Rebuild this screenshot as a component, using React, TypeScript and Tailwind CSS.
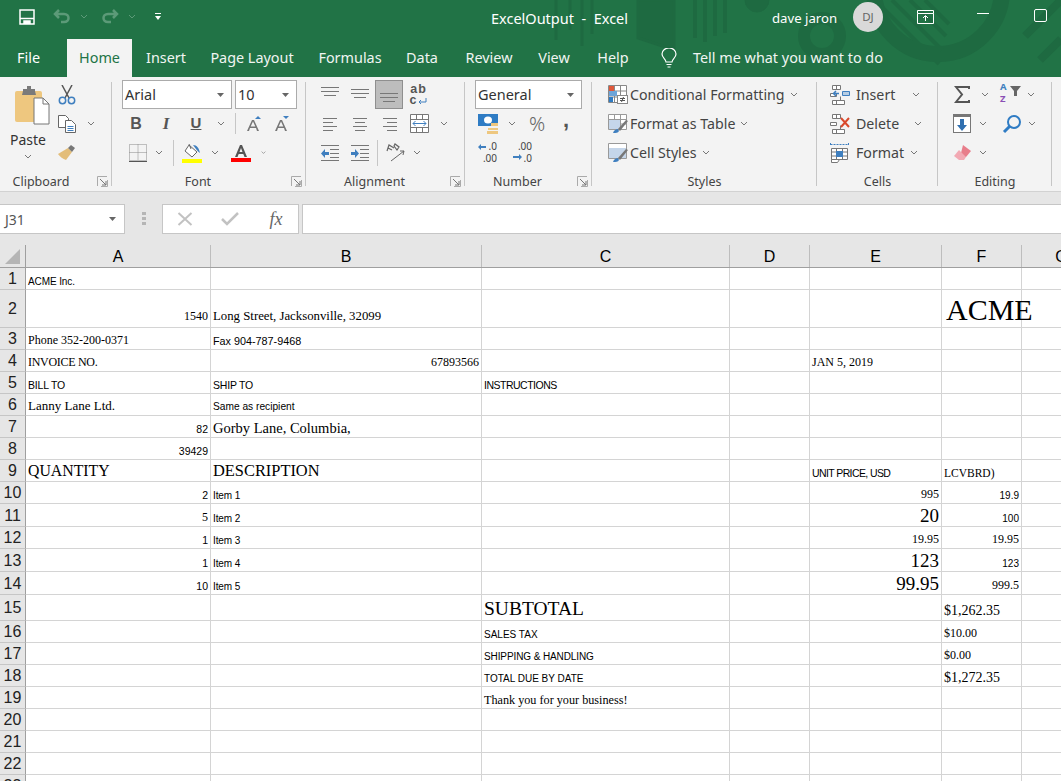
import type { ReactNode } from "react";

const ui = "font-['Noto_Sans',sans-serif]";
const sans = "font-['Liberation_Sans',sans-serif]";
const serif = "font-['Liberation_Serif',serif]";

/* ── small helpers ─────────────────────────────────── */

function Chev({ color = "#777" }: { color?: string }) {
  return (
    <svg width="8" height="5" viewBox="0 0 8 5" fill="none" stroke={color} strokeWidth="1">
      <path d="M1 1l3 3 3-3" />
    </svg>
  );
}

function Caret() {
  return (
    <svg width="7" height="4" viewBox="0 0 7 4" fill="#666">
      <path d="M0 0h7L3.5 4z" />
    </svg>
  );
}

function Launcher() {
  return (
    <svg width="11" height="11" viewBox="0 0 11 11" fill="none" stroke="#777">
      <path d="M.5 10V.5H10" stroke="#aaa" />
      <path d="M3 3l6 6M9 5v4H5" />
      <path d="M10.5 4v6.5H4" stroke="#aaa" />
    </svg>
  );
}

function Slot({ w, children, className = "" }: { w: string; children?: ReactNode; className?: string }) {
  return <div className={`${w} h-full flex items-center justify-center shrink-0 ${className}`}>{children}</div>;
}

function Lines({ rows }: { rows: [number, number, number][] }) {
  return (
    <svg width="18" height="16" viewBox="0 0 18 16" stroke="#777">
      {rows.map(([y, a, b], i) => (
        <path key={i} d={`M${a} ${y + 0.5}H${b}`} />
      ))}
    </svg>
  );
}

function Group({ w, label, launcher, pad = "", children }: { w: string; label: string; launcher?: boolean; pad?: string; children: ReactNode }) {
  return (
    <div className={`${w} shrink-0 relative flex flex-col`}>
      <div className="flex-1">{children}</div>
      <div className={`h-[20px] pt-[2px] flex items-center justify-center text-[12.5px] text-[#444] ${pad}`}>{label}</div>
      {launcher && (
        <div className="absolute right-[4px] bottom-[4px] flex">
          <Launcher />
        </div>
      )}
      <div className="absolute right-0 top-[5px] bottom-[5px] w-px bg-[#c6c6c6]" />
    </div>
  );
}

function Row({ children, className = "" }: { children: ReactNode; className?: string }) {
  return <div className={`h-[29px] flex items-center ${className}`}>{children}</div>;
}

function Select({ w, text }: { w: string; text: string }) {
  return (
    <div className={`${w} h-[29px] shrink-0 bg-white border border-[#ababab] flex items-center justify-between pl-[2px] pr-[7px] text-[14.5px] text-[#333]`}>
      <span>{text}</span>
      <Caret />
    </div>
  );
}

/* ── ribbon icons ──────────────────────────────────── */

function PasteIcon() {
  return (
    <svg width="36" height="40" viewBox="0 0 36 40">
      <rect x="1" y="5" width="27" height="31" rx="2" fill="#eec77f" />
      <path d="M9 5V3h4V0h4v3h4v2l1 4H8z" fill="#7a7a7a" />
      <path d="M20 12h9l6 6v20H20z" fill="#fff" stroke="#777" />
      <path d="M29 12v6h6" fill="none" stroke="#777" />
    </svg>
  );
}

function ScissorsIcon() {
  return (
    <svg width="18" height="20" viewBox="0 0 18 20" fill="none">
      <path d="M4 0l7 13M14 0L7 13" stroke="#555" strokeWidth="1.5" />
      <circle cx="4.5" cy="15.5" r="3.2" stroke="#3f7fbf" strokeWidth="1.5" />
      <circle cx="13.5" cy="15.5" r="3.2" stroke="#3f7fbf" strokeWidth="1.5" />
    </svg>
  );
}

function CopyIcon() {
  return (
    <svg width="18" height="18" viewBox="0 0 18 18" fill="#fff" stroke="#666">
      <path d="M.5.5h7l3 3v9h-10z" />
      <path d="M7.5 5.5h6l4 4v8h-10z" />
      <path d="M9.5 11.5h6M9.5 13.5h6M9.5 15.5h6" stroke="#3f7fbf" />
    </svg>
  );
}

function BrushIcon() {
  return (
    <svg width="18" height="16" viewBox="0 0 18 16">
      <path d="M10 3l4 4-6 8c-3-1-6-3-8-6z" fill="#e3bd79" />
      <path d="M10 3l3-3 4 3-3 4z" fill="#777" />
    </svg>
  );
}

function BorderIcon() {
  return (
    <svg width="18" height="18" viewBox="0 0 18 18" fill="none" stroke="#888" strokeDasharray="1 1">
      <path d="M.5.5h17v16H.5zM9 .5v16M.5 8.5h17" />
      <path d="M0 17.5h18" stroke="#555" strokeDasharray="none" />
    </svg>
  );
}

function FillIcon() {
  return (
    <svg width="20" height="20" viewBox="0 0 20 20">
      <path d="M7 2l8 7-5 5-7-6z" fill="#fff" stroke="#666" />
      <path d="M7 1l2 5" stroke="#666" fill="none" />
      <path d="M11 2c4 0 6 3 7 8-2-1-3-3-4-4z" fill="#3f7fbf" />
      <rect y="16" width="20" height="4" fill="#ffff00" />
    </svg>
  );
}

function FontColorIcon() {
  return (
    <svg width="20" height="18" viewBox="0 0 20 18">
      <path d="M4 13L9 1h2l5 12h-2.5l-1.200-3H7.700l-1.200 3zM8.500 8h3L10 4z" fill="#555" />
      <rect y="14" width="20" height="4.5" fill="#f00" />
    </svg>
  );
}

function GrowIcon({ up }: { up: boolean }) {
  return (
    <svg width="16" height="16" viewBox="0 0 16 16">
      <path d="M1 15L6 4h2l5 11h-2l-1-3H4l-1 3zM4.700 10.500h4.600L7 5.500z" fill="#777" />
      <path d={up ? "M9 3l3-3 3 3z" : "M9 0h6l-3 3z"} fill="#3f7fbf" />
    </svg>
  );
}

function WrapIcon() {
  return (
    <svg width="18" height="18" viewBox="0 0 18 18" fill="none">
      <path d="M9 16h7v-4" stroke="#3f7fbf" />
      <path d="M11 14l-2 2 2 2" stroke="#3f7fbf" />
    </svg>
  );
}

function MergeIcon() {
  return (
    <svg width="19" height="19" viewBox="0 0 19 19" fill="#fff" stroke="#777">
      <path d="M.5.5h18v18H.5zM.5 5.500h18M.5 13.500h18M6.500.5v5M12.500.5v5M6.500 13.500v5M12.500 13.500v5" />
      <path d="M3 9.500h13M5.500 7L3 9.500 5.500 12M13.500 7l2.500 2.500-2.500 2.500" stroke="#3f7fbf" fill="none" />
    </svg>
  );
}

function IndentIcon({ flip }: { flip: boolean }) {
  return (
    <svg width="18" height="16" viewBox="0 0 18 16">
      <path d="M0 .5h18M9 4.500h9M9 8.500h9M9 12.500h9M0 15.500h18" stroke="#777" />
      <path d={flip ? "M0 8.500L4 4v3h4v3H4v3z" : "M8 8.500L4 4v3H0v3h4v3z"} fill="#3f7fbf" />
    </svg>
  );
}

function OrientIcon() {
  return (
    <svg width="20" height="20" viewBox="0 0 20 20" fill="none" stroke="#666">
      <path d="M5 18L18 8M18 8h-4M18 8l-1 4" />
      <path d="M1 8l2-6 5 3M2 5l4 2M8 3l1-2 4 3-2 3z" strokeWidth="1.2" />
    </svg>
  );
}

function AccountingIcon() {
  return (
    <svg width="20" height="20" viewBox="0 0 20 20">
      <rect width="20" height="12" fill="#2f7cc4" />
      <ellipse cx="10" cy="6" rx="4" ry="3.5" fill="#fff" />
      <path d="M10 14h10v2H10zM9 17h11v3H9z" fill="#eec77f" />
      <path d="M13 9h7v3h-7z" fill="#eec77f" />
    </svg>
  );
}

function DecimalIcon({ inc }: { inc: boolean }) {
  return (
    <div className="relative w-[20px] h-[19px]">
      <svg width="20" height="19" viewBox="0 0 20 19" className="absolute inset-0">
        <path d={inc ? "M6 14H0v2h6v2l3-3-3-3z" : "M3 1L0 4l3 3V5h5V3H3z"} fill="#3f7fbf" transform={inc ? "translate(0,-1)" : "translate(0,0)"} />
      </svg>
      <div className="absolute right-[1px] top-[-3px] text-[10px] leading-[12px] text-[#444] text-right">
        {inc ? ".00" : ".0"}
        <br />
        {inc ? ".0" : ".00"}
      </div>
    </div>
  );
}

function CondIcon() {
  return (
    <svg width="20" height="19" viewBox="0 0 20 19" stroke="#888" fill="#fff">
      <path d="M.5.5h18v17H.5zM.5 6h18M.5 12h18M6.500.5v17M12.500.5v17" />
      <path d="M1 1h5v5H1z" fill="#e0583a" stroke="none" />
      <path d="M1 6h8v5H1z" fill="#6da4d8" stroke="none" />
      <path d="M1 12h4v5H1z" fill="#2f7cc4" stroke="none" />
      <rect x="9.5" y="10.5" width="10" height="8" fill="#fff" />
      <path d="M12 13.500h5M12 15.500h5M15.500 12l-2 5" stroke="#555" />
    </svg>
  );
}

function TableStyleIcon({ cell }: { cell: boolean }) {
  return (
    <svg width="20" height="19" viewBox="0 0 20 19" stroke="#999" fill="#fff">
      <path d="M.5.5h18v15H.5z" />
      {cell ? (
        <path d="M1 5h17v10H1z" fill="#c5d6ea" stroke="none" />
      ) : (
        <path d="M.5 5.500h18M.5 10h18M6.500.5v15M12.500.5v15" />
      )}
      {!cell && <path d="M1 6h11v9H1z" fill="#c5d6ea" stroke="none" />}
      <path d="M5 19c1-3 3-4 5-4l1 2c-1 2-3 2-6 2z" fill="#3f7fbf" stroke="none" />
      <path d="M10 15l8-9 2 1-8 10z" fill="#777" stroke="none" />
    </svg>
  );
}

function CellOpIcon({ kind }: { kind: "insert" | "delete" | "format" }) {
  return (
    <svg width="20" height="20" viewBox="0 0 20 20" fill="#fff" stroke="#777">
      {kind === "format" ? (
        <>
          <path d="M.5 1.500h18M.5 0v3M18.500 0v3" stroke="#3f7fbf" strokeDasharray="2 1" />
          <path d="M1.500 5.500h16v11h-16zM1.500 9h16M1.500 13h16M6.500 5.500v11M12.500 5.500v11" />
          <rect x="6" y="8" width="7" height="6" fill="#3f7fbf" stroke="none" />
          <path d="M1.500 16.500h8l-2 3h-6z" />
        </>
      ) : (
        <>
          <path d="M2.500.5h8v4h-8zM2.500 15.500h12v4h-12zM6.500.5v4M6.500 15.500v4M.5 8.500h6v3h-6z" />
          <path d="M10.500 15.500v-4" />
          {kind === "insert" ? (
            <>
              <path d="M12.500 6.500h7v4h-7z" fill="#b7cde3" stroke="#3f7fbf" />
              <path d="M9 8.500H3.500M6 6L3.500 8.500 6 11" stroke="#3f7fbf" fill="none" strokeWidth="1.5" />
            </>
          ) : (
            <path d="M11 4l8 9M19 4l-8 9" stroke="#d9492c" strokeWidth="2" />
          )}
        </>
      )}
    </svg>
  );
}

function FillDownIcon() {
  return (
    <svg width="18" height="20" viewBox="0 0 18 20">
      <rect x=".5" y=".5" width="17" height="18" fill="#fff" stroke="#777" />
      <path d="M1 1h16v2H1z" fill="#777" />
      <path d="M7 5h4v6h3l-5 6-5-6h3z" fill="#2f6fb0" />
    </svg>
  );
}

function SortIcon() {
  return (
    <div className="relative w-[22px] h-[19px]">
      <div className="absolute left-0 top-[-3px] text-[9.5px] leading-[10px] font-bold text-[#3f7fbf]">A</div>
      <div className="absolute left-0 top-[9px] text-[9.5px] leading-[10px] font-bold text-[#8a4fb5]">Z</div>
      <svg width="11" height="10" viewBox="0 0 11 10" className="absolute left-[10px] top-[1px]">
        <path d="M0 0h11L7 5v5H4V5z" fill="#666" />
      </svg>
    </div>
  );
}

/* ── sheet data ────────────────────────────────────── */

// p overrides the bottom gap that a cell's font would get by default
type Cell = { c: number; t: string; f: "s" | "t"; z: string; r?: boolean; x?: string; p?: string };

const columns = [
  { name: "A", w: "w-[185px]" },
  { name: "B", w: "w-[271px]" },
  { name: "C", w: "w-[248px]" },
  { name: "D", w: "w-[80px]" },
  { name: "E", w: "w-[132px]" },
  { name: "F", w: "w-[80px]" },
  { name: "G", w: "w-[80px]" },
];

const rows: { n: number; h: string; cells: Cell[] }[] = [
  { n: 1, h: "h-[22px]", cells: [{ c: 0, t: "ACME Inc.", f: "s", z: "text-[10px] tracking-[-0.1px]" }] },
  {
    n: 2,
    h: "h-[38px]",
    cells: [
      { c: 0, t: "1540", f: "t", z: "text-[12px]", r: true, p: "pb-[3px]" },
      { c: 1, t: "Long Street, Jacksonville, 32099", f: "t", z: "text-[12.8px]", p: "pb-[3px]" },
      { c: 5, t: "ACME", f: "t", z: "text-[30px]", x: "pl-[2px]", p: "pb-0" },
    ],
  },
  {
    n: 3,
    h: "h-[22px]",
    cells: [
      { c: 0, t: "Phone 352-200-0371", f: "t", z: "text-[12px]" },
      { c: 1, t: "Fax 904-787-9468", f: "s", z: "text-[10.8px]" },
    ],
  },
  {
    n: 4,
    h: "h-[22px]",
    cells: [
      { c: 0, t: "INVOICE NO.", f: "t", z: "text-[12px] tracking-[-0.3px]" },
      { c: 1, t: "67893566", f: "t", z: "text-[12px]", r: true },
      { c: 4, t: "JAN 5, 2019", f: "t", z: "text-[12px]" },
    ],
  },
  {
    n: 5,
    h: "h-[22px]",
    cells: [
      { c: 0, t: "BILL TO", f: "s", z: "text-[10.5px] tracking-[-0.2px]" },
      { c: 1, t: "SHIP TO", f: "s", z: "text-[10.5px] tracking-[-0.2px]" },
      { c: 2, t: "INSTRUCTIONS", f: "s", z: "text-[10.5px] tracking-[-0.5px]" },
    ],
  },
  {
    n: 6,
    h: "h-[22px]",
    cells: [
      { c: 0, t: "Lanny Lane Ltd.", f: "t", z: "text-[13px]" },
      { c: 1, t: "Same as recipient", f: "s", z: "text-[10.2px]" },
    ],
  },
  {
    n: 7,
    h: "h-[22px]",
    cells: [
      { c: 0, t: "82", f: "s", z: "text-[10.5px]", r: true },
      { c: 1, t: "Gorby Lane, Columbia,", f: "t", z: "text-[14.5px]", p: "pb-0" },
    ],
  },
  { n: 8, h: "h-[22px]", cells: [{ c: 0, t: "39429", f: "s", z: "text-[10.5px]", r: true }] },
  {
    n: 9,
    h: "h-[22px]",
    cells: [
      { c: 0, t: "QUANTITY", f: "t", z: "text-[15.8px]" },
      { c: 1, t: "DESCRIPTION", f: "t", z: "text-[16.4px]", p: "pb-0" },
      { c: 4, t: "UNIT PRICE, USD", f: "s", z: "text-[10.5px] tracking-[-0.6px]" },
      { c: 5, t: "LCVBRD)", f: "t", z: "text-[11.5px]" },
    ],
  },
  {
    n: 10,
    h: "h-[22px]",
    cells: [
      { c: 0, t: "2", f: "s", z: "text-[10.5px]", r: true },
      { c: 1, t: "Item 1", f: "s", z: "text-[10px] tracking-[-0.1px]" },
      { c: 4, t: "995", f: "t", z: "text-[12px]", r: true },
      { c: 5, t: "19.9", f: "s", z: "text-[10px]", r: true },
    ],
  },
  {
    n: 11,
    h: "h-[23px]",
    cells: [
      { c: 0, t: "5", f: "t", z: "text-[12px]", r: true },
      { c: 1, t: "Item 2", f: "s", z: "text-[10px] tracking-[-0.1px]" },
      { c: 4, t: "20", f: "t", z: "text-[19px]", r: true, p: "mb-[-1px]" },
      { c: 5, t: "100", f: "s", z: "text-[10px]", r: true },
    ],
  },
  {
    n: 12,
    h: "h-[22px]",
    cells: [
      { c: 0, t: "1", f: "s", z: "text-[10.5px]", r: true },
      { c: 1, t: "Item 3", f: "s", z: "text-[10px] tracking-[-0.1px]" },
      { c: 4, t: "19.95", f: "t", z: "text-[12px]", r: true },
      { c: 5, t: "19.95", f: "t", z: "text-[12px]", r: true },
    ],
  },
  {
    n: 13,
    h: "h-[23px]",
    cells: [
      { c: 0, t: "1", f: "s", z: "text-[10.5px]", r: true },
      { c: 1, t: "Item 4", f: "s", z: "text-[10px] tracking-[-0.1px]" },
      { c: 4, t: "123", f: "t", z: "text-[19px]", r: true, p: "mb-[-1px]" },
      { c: 5, t: "123", f: "s", z: "text-[10px]", r: true },
    ],
  },
  {
    n: 14,
    h: "h-[23px]",
    cells: [
      { c: 0, t: "10", f: "s", z: "text-[10.5px]", r: true },
      { c: 1, t: "Item 5", f: "s", z: "text-[10px] tracking-[-0.1px]" },
      { c: 4, t: "99.95", f: "t", z: "text-[19px]", r: true, p: "mb-[-1px]" },
      { c: 5, t: "999.5", f: "t", z: "text-[12px]", r: true },
    ],
  },
  {
    n: 15,
    h: "h-[26px]",
    cells: [
      { c: 2, t: "SUBTOTAL", f: "t", z: "text-[19.5px]", p: "pb-0" },
      { c: 5, t: "$1,262.35", f: "t", z: "text-[14px]" },
    ],
  },
  {
    n: 16,
    h: "h-[22px]",
    cells: [
      { c: 2, t: "SALES TAX", f: "s", z: "text-[10px]" },
      { c: 5, t: "$10.00", f: "t", z: "text-[12px]" },
    ],
  },
  {
    n: 17,
    h: "h-[22px]",
    cells: [
      { c: 2, t: "SHIPPING & HANDLING", f: "s", z: "text-[10px] tracking-[-0.1px]" },
      { c: 5, t: "$0.00", f: "t", z: "text-[12px]" },
    ],
  },
  {
    n: 18,
    h: "h-[22px]",
    cells: [
      { c: 2, t: "TOTAL DUE BY DATE", f: "s", z: "text-[10px]" },
      { c: 5, t: "$1,272.35", f: "t", z: "text-[14px]", p: "pb-0" },
    ],
  },
  { n: 19, h: "h-[22px]", cells: [{ c: 2, t: "Thank you for your business!", f: "t", z: "text-[12.2px]" }] },
  { n: 20, h: "h-[22px]", cells: [] },
  { n: 21, h: "h-[22px]", cells: [] },
  { n: 22, h: "h-[22px]", cells: [] },
  { n: 23, h: "h-[22px]", cells: [] },
];

const tabs = [
  { t: "Insert", w: "w-[68px]" },
  { t: "Page Layout", w: "w-[104px]" },
  { t: "Formulas", w: "w-[92px]" },
  { t: "Data", w: "w-[52px]" },
  { t: "Review", w: "w-[82px]" },
  { t: "View", w: "w-[48px]" },
  { t: "Help", w: "w-[70px]" },
];

/* ── page ──────────────────────────────────────────── */

export default function App() {
  return (
    <div className={`w-[1061px] h-[781px] overflow-hidden bg-white flex flex-col ${ui}`}>
      {/* ── Title bar + tabs ──────────────────────────── */}
      <div className="relative h-[77px] bg-[#217346] shrink-0 text-white">
        <svg width="531" height="77" viewBox="0 0 531 77" fill="none" className="absolute left-[530px] top-0" stroke="#1e6a41">
          <path d="M26 0v40M40 0v30M52 0v46M62 0v34M108 0v38l36 12V0z" fill="#1e6a41" strokeWidth="3" />
          <path d="M165 0v38M175 0v42M185 0v36M195 0v33" strokeWidth="4" />
          <circle cx="227" cy="0" r="12" fill="#1e6a41" />
          <circle cx="292" cy="36" r="18" strokeWidth="12" />
          <circle cx="408" cy="-10" r="64" strokeWidth="16" />
          <path d="M345 0l64 64M362 0l50 50M380 0l36 36M395 0l24 24" strokeWidth="4" />
          <path d="M495 36L531 0M510 60l21-21" strokeWidth="8" />
        </svg>

        <div className="relative h-[39px] flex items-center pb-[6px]">
          <Slot w="w-[16px]" />
          <Slot w="w-[22px]">
            <svg width="16" height="16" viewBox="0 0 16 16" fill="none" stroke="#fff" strokeWidth="1.5">
              <path d="M1 1h14v14H1z" />
              <path d="M1 9.500h14" />
              <path d="M5 15v-3h6v3" fill="#fff" />
            </svg>
          </Slot>
          <Slot w="w-[14px]" />
          <Slot w="w-[20px]">
            <svg width="18" height="15" viewBox="0 0 18 15" fill="none" stroke="#5c9a78" strokeWidth="2.5">
              <path d="M6 1L2 5l4 4M2 5h9c6 0 6 8 0 8H8" />
            </svg>
          </Slot>
          <Slot w="w-[6px]" />
          <Slot w="w-[12px]">
            <Chev color="#5c9a78" />
          </Slot>
          <Slot w="w-[10px]" />
          <Slot w="w-[20px]">
            <svg width="18" height="15" viewBox="0 0 18 15" fill="none" stroke="#5c9a78" strokeWidth="2.5">
              <path d="M12 1l4 4-4 4M16 5H7c-6 0-6 8 0 8h3" />
            </svg>
          </Slot>
          <Slot w="w-[6px]" />
          <Slot w="w-[12px]">
            <Chev color="#5c9a78" />
          </Slot>
          <Slot w="w-[16px]" />
          <Slot w="w-[8px]">
            <svg width="6" height="7" viewBox="0 0 6 7" fill="#fff">
              <path d="M0 0h6v1H0zM0 3h6L3 7z" />
            </svg>
          </Slot>
          <div className="ml-[329px] mt-[4px] w-[140px] text-[14.5px] whitespace-pre">ExcelOutput  -  Excel</div>
          <div className="ml-[141px] mt-[4px] w-[64px] whitespace-nowrap text-[13.2px]">dave jaron</div>
          <div className="ml-[17px] w-[30px] h-[30px] rounded-full bg-[#d9d9d9] flex items-center justify-center text-[11.5px] text-[#666]">DJ</div>
          <Slot w="w-[17px]" className="ml-[34px]">
            <svg width="17" height="14" viewBox="0 0 17 14" fill="none" stroke="#fff">
              <path d="M.5 3.500h16v10H.5zM.5.5h16M.5 3.500v-3M16.500 3.500v-3" />
              <path d="M8.500 11V6M6 8l2.500-2.500L11 8" />
            </svg>
          </Slot>
          <div className="ml-[43px] w-[12px] h-px bg-white mb-[6px]" />
          <div className="ml-[45px] w-[13px] h-[13px] rounded-[2px] border border-white mb-[3px]" />
        </div>

        <div className="relative h-[38px] flex items-end text-[14.4px] text-[#f0f5f2]">
          <div className="w-[67px] h-[38px] flex items-center pl-[17px] text-white">File</div>
          <div className="w-[65px] h-[38px] bg-[#f3f3f3] text-[#217346] flex items-center justify-center">Home</div>
          {tabs.map((tab) => (
            <div key={tab.t} className={`${tab.w} h-[38px] flex items-center justify-center`}>
              {tab.t}
            </div>
          ))}
          <div className="ml-[13px] h-[38px] flex items-center">
            <svg width="16" height="20" viewBox="0 0 16 20" fill="none" stroke="#fff" strokeWidth="1.2">
              <path d="M5 14c0-3-4-4-4-8a7 6 0 0114 0c0 4-4 5-4 8z" />
              <path d="M5.500 16.500h5M6.500 19h3" />
            </svg>
          </div>
          <div className="ml-[16px] h-[38px] flex items-center">Tell me what you want to do</div>
        </div>
      </div>

      {/* ── Ribbon ────────────────────────────────────── */}
      <div className="h-[115px] shrink-0 bg-[#f3f3f3] border-b border-[#d2d2d2] flex text-[#444]">
        <Group w="w-[112px]" label="Clipboard" launcher pad="pr-[30px]">
          <div className="flex h-[90px]">
            <div className="w-[56px] flex flex-col items-center pt-[9px]">
              <div className="flex ml-[7px]">
                <PasteIcon />
              </div>
              <div className="text-[14px] mt-[4px] leading-[20px] text-[#333]">Paste</div>
              <div className="mt-[4px] flex">
                <Chev />
              </div>
            </div>
            <div className="flex flex-col pt-[3px]">
              <Row>
                <Slot w="w-[22px]">
                  <ScissorsIcon />
                </Slot>
              </Row>
              <Row>
                <Slot w="w-[22px]">
                  <CopyIcon />
                </Slot>
                <Slot w="w-[22px]" className="ml-[2px]">
                  <Chev />
                </Slot>
              </Row>
              <Row>
                <Slot w="w-[22px]">
                  <BrushIcon />
                </Slot>
              </Row>
            </div>
          </div>
        </Group>

        <Group w="w-[194px]" label="Font" launcher pad="pr-[22px]">
          <div className="flex flex-col pt-[3px] pl-[10px]">
            <Row className="gap-[3px]">
              <Select w="w-[110px]" text="Arial" />
              <Select w="w-[62px]" text="10" />
            </Row>
            <Row>
              <Slot w="w-[26px]" className="ml-[1px]">
                <span className={`${sans} font-bold text-[16px] text-[#555]`}>B</span>
              </Slot>
              <Slot w="w-[34px]" className={`${serif} font-bold italic text-[17px] text-[#555]`}>
                I
              </Slot>
              <Slot w="w-[26px]" className={`${sans} font-bold text-[15px] text-[#555] underline`}>
                U
              </Slot>
              <Slot w="w-[20px]" className="ml-[2px]">
                <Chev />
              </Slot>
              <div className="w-px h-[21px] bg-[#c6c6c6] ml-[4px]" />
              <Slot w="w-[36px]">
                <GrowIcon up />
              </Slot>
              <Slot w="w-[20px]">
                <GrowIcon up={false} />
              </Slot>
            </Row>
            <Row>
              <Slot w="w-[32px]">
                <BorderIcon />
              </Slot>
              <Slot w="w-[10px]">
                <Chev />
              </Slot>
              <div className="w-px h-[26px] bg-[#c6c6c6] ml-[9px]" />
              <Slot w="w-[36px]">
                <FillIcon />
              </Slot>
              <Slot w="w-[10px]">
                <Chev />
              </Slot>
              <Slot w="w-[41px]">
                <FontColorIcon />
              </Slot>
              <Slot w="w-[5px]">
                <Chev />
              </Slot>
            </Row>
          </div>
        </Group>

        <Group w="w-[159px]" label="Alignment" launcher pad="pr-[22px]">
          <div className="flex flex-col pt-[3px] pl-[9px]">
            <Row>
              <Slot w="w-[30px]" className="pb-[4px]">
                <Lines rows={[[2, 0, 18], [6, 0, 18], [10, 3, 15]]} />
              </Slot>
              <Slot w="w-[30px]">
                <Lines rows={[[2, 0, 18], [6, 0, 18], [10, 3, 15]]} />
              </Slot>
              <Slot w="w-[28px]" className="bg-[#bdbdbd] border border-[#8f8f8f]">
                <Lines rows={[[6, 0, 18], [10, 0, 18], [14, 3, 15]]} />
              </Slot>
              <Slot w="w-[31px]" className="relative">
                <div className={`${sans} text-[12.5px] leading-[11px] font-bold tracking-[1px] text-[#555] text-center`}>
                  ab
                  <br />
                  <span className="inline-block w-[18px] text-left">c</span>
                </div>
                <div className="absolute left-[7px] top-[6px] flex">
                  <WrapIcon />
                </div>
              </Slot>
            </Row>
            <Row>
              <Slot w="w-[30px]">
                <Lines rows={[[2, 2, 16], [6, 2, 12], [10, 2, 16], [14, 2, 12]]} />
              </Slot>
              <Slot w="w-[30px]">
                <Lines rows={[[2, 2, 16], [6, 4, 14], [10, 2, 16], [14, 4, 14]]} />
              </Slot>
              <Slot w="w-[30px]">
                <Lines rows={[[2, 2, 16], [6, 6, 16], [10, 2, 16], [14, 6, 16]]} />
              </Slot>
              <Slot w="w-[29px]">
                <MergeIcon />
              </Slot>
              <Slot w="w-[20px]">
                <Chev />
              </Slot>
            </Row>
            <Row>
              <Slot w="w-[30px]">
                <IndentIcon flip />
              </Slot>
              <Slot w="w-[30px]">
                <IndentIcon flip={false} />
              </Slot>
              <div className="w-px h-[26px] bg-[#c6c6c6] ml-[2px]" />
              <Slot w="w-[34px]" className="ml-[1px]">
                <OrientIcon />
              </Slot>
              <Slot w="w-[8px]">
                <Chev />
              </Slot>
            </Row>
          </div>
        </Group>

        <Group w="w-[127px]" label="Number" launcher pad="pr-[22px]">
          <div className="flex flex-col pt-[3px] pl-[10px]">
            <Row>
              <Select w="w-[107px]" text="General" />
            </Row>
            <Row>
              <Slot w="w-[26px]">
                <AccountingIcon />
              </Slot>
              <Slot w="w-[22px]">
                <Chev />
              </Slot>
              <Slot w="w-[28px]" className="text-[20px] text-[#666] font-light">
                %
              </Slot>
              <Slot w="w-[30px]" className={`${sans} text-[22px] font-bold text-[#555] pb-[8px]`}>
                ,
              </Slot>
            </Row>
            <Row>
              <Slot w="w-[26px]">
                <DecimalIcon inc={false} />
              </Slot>
              <Slot w="w-[10px]" />
              <Slot w="w-[24px]">
                <DecimalIcon inc />
              </Slot>
            </Row>
          </div>
        </Group>

        <Group w="w-[225px]" label="Styles">
          <div className="flex flex-col pt-[3px] pl-[14px] text-[14.2px]">
            <Row>
              <Slot w="w-[24px]">
                <CondIcon />
              </Slot>
              <span>Conditional Formatting</span>
              <span className="ml-[5px] flex">
                <Chev />
              </span>
            </Row>
            <Row>
              <Slot w="w-[24px]">
                <TableStyleIcon cell={false} />
              </Slot>
              <span>Format as Table</span>
              <span className="ml-[5px] flex">
                <Chev />
              </span>
            </Row>
            <Row>
              <Slot w="w-[24px]">
                <TableStyleIcon cell />
              </Slot>
              <span>Cell Styles</span>
              <span className="ml-[5px] flex">
                <Chev />
              </span>
            </Row>
          </div>
        </Group>

        <Group w="w-[121px]" label="Cells">
          <div className="flex flex-col pt-[3px] pl-[13px] text-[14.2px]">
            <Row>
              <Slot w="w-[20px]">
                <CellOpIcon kind="insert" />
              </Slot>
              <span className="ml-[6px]">Insert</span>
              <span className="ml-[17px] flex">
                <Chev />
              </span>
            </Row>
            <Row>
              <Slot w="w-[20px]">
                <CellOpIcon kind="delete" />
              </Slot>
              <span className="ml-[6px]">Delete</span>
              <span className="ml-[15px] flex">
                <Chev />
              </span>
            </Row>
            <Row>
              <Slot w="w-[20px]">
                <CellOpIcon kind="format" />
              </Slot>
              <span className="ml-[6px]">Format</span>
              <span className="ml-[6px] flex">
                <Chev />
              </span>
            </Row>
          </div>
        </Group>

        <Group w="w-[114px]" label="Editing">
          <div className="flex flex-col pt-[3px] pl-[14px]">
            <Row>
              <Slot w="w-[20px]">
                <svg width="16" height="17" viewBox="0 0 16 17" fill="none" stroke="#555" strokeWidth="2">
                  <path d="M15 3V1H2l6 7.5L2 16h13v-2" />
                </svg>
              </Slot>
              <Slot w="w-[26px]">
                <Chev />
              </Slot>
              <Slot w="w-[22px]" className="ml-[2px]">
                <SortIcon />
              </Slot>
              <Slot w="w-[18px]">
                <Chev />
              </Slot>
            </Row>
            <Row>
              <Slot w="w-[20px]">
                <FillDownIcon />
              </Slot>
              <Slot w="w-[22px]">
                <Chev />
              </Slot>
              <Slot w="w-[28px]" className="ml-[4px]">
                <svg width="20" height="20" viewBox="0 0 20 20" fill="none" stroke="#2f7cc4" strokeWidth="2">
                  <circle cx="12" cy="8" r="6" />
                  <path d="M8 12l-6 6" strokeWidth="3" />
                </svg>
              </Slot>
              <Slot w="w-[12px]">
                <Chev />
              </Slot>
            </Row>
            <Row>
              <Slot w="w-[20px]">
                <svg width="18" height="16" viewBox="0 0 18 16">
                  <path d="M10 0l8 6-5 6H7z" fill="#e87d8a" />
                  <path d="M6 5l7 7-2 3H6L1 11z" fill="#f2a9b3" />
                </svg>
              </Slot>
              <Slot w="w-[22px]">
                <Chev />
              </Slot>
            </Row>
          </div>
        </Group>
      </div>

      {/* ── Formula bar ───────────────────────────────── */}
      <div className="h-[53px] shrink-0 bg-[#e6e6e6] flex pt-[12px]">
        <div className="w-[125px] h-[30px] bg-white border border-[#c6c6c6] border-l-0 flex items-center justify-between pl-[5px] pr-[8px] text-[14px] text-[#555] shrink-0">
          <span>J31</span>
          <Caret />
        </div>
        <div className="w-[37px] h-[30px] flex items-center justify-center shrink-0">
          <svg width="4" height="14" viewBox="0 0 4 14" fill="#b5b5b5">
            <path d="M0 0h4v3H0zM0 5h4v3H0zM0 10h4v3H0z" />
          </svg>
        </div>
        <div className="w-[137px] h-[30px] bg-white border border-[#c6c6c6] flex items-center shrink-0">
          <Slot w="w-[44px]">
            <svg width="16" height="14" viewBox="0 0 16 14" fill="none" stroke="#c2c2c2" strokeWidth="2">
              <path d="M1.5 1l13 12M14.5 1l-13 12" />
            </svg>
          </Slot>
          <Slot w="w-[46px]">
            <svg width="18" height="14" viewBox="0 0 18 14" fill="none" stroke="#c2c2c2" strokeWidth="2.5">
              <path d="M1 7l5 5L17 1" />
            </svg>
          </Slot>
          <Slot w="w-[46px]" className={`${serif} italic text-[18px] text-[#666]`}>
            fx
          </Slot>
        </div>
        <div className="ml-[3px] flex-1 h-[30px] bg-white border border-[#c6c6c6] border-r-0" />
      </div>

      {/* ── Sheet ─────────────────────────────────────── */}
      <div className={`flex-1 overflow-hidden ${sans}`}>
        <div className="flex h-[23px] bg-[#e6e6e6] border-b border-[#9f9f9f]">
          <div className="w-[26px] shrink-0 border-r border-[#9f9f9f] flex items-center justify-center">
            <svg width="15" height="15" viewBox="0 0 15 15" fill="#b5b5b5">
              <path d="M15 0v15H0z" />
            </svg>
          </div>
          {columns.map((col) => (
            <div key={col.name} className={`${col.w} shrink-0 border-r border-[#bdbdbd] text-center text-[16px] leading-[23px] text-black`}>
              {col.name}
            </div>
          ))}
        </div>

        {rows.map((row) => (
          <div key={row.n} className={`flex ${row.h}`}>
            <div className="w-[26px] shrink-0 bg-[#e6e6e6] border-r border-[#9f9f9f] border-b border-b-[#c6c6c6] flex items-center justify-center pt-[1px] text-[16px] text-[#222]">
              {row.n}
            </div>
            {columns.map((col, i) => {
              const cell = row.cells.find((item) => item.c === i);
              const gap = cell?.p ?? (cell?.f === "t" ? "pb-[1px]" : "pb-[2px]");
              return (
                <div
                  key={col.name}
                  className={`${col.w} shrink-0 border-r border-b border-[#d4d4d4] flex items-end whitespace-nowrap text-black ${cell?.r ? "justify-end pr-[2px]" : "pl-[2px]"}`}
                >
                  {cell && (
                    <span className={`${cell.f === "s" ? sans : serif} ${cell.z} ${cell.x ?? ""} ${gap} leading-[1.15] block`}>{cell.t}</span>
                  )}
                </div>
              );
            })}
          </div>
        ))}
      </div>
    </div>
  );
}
